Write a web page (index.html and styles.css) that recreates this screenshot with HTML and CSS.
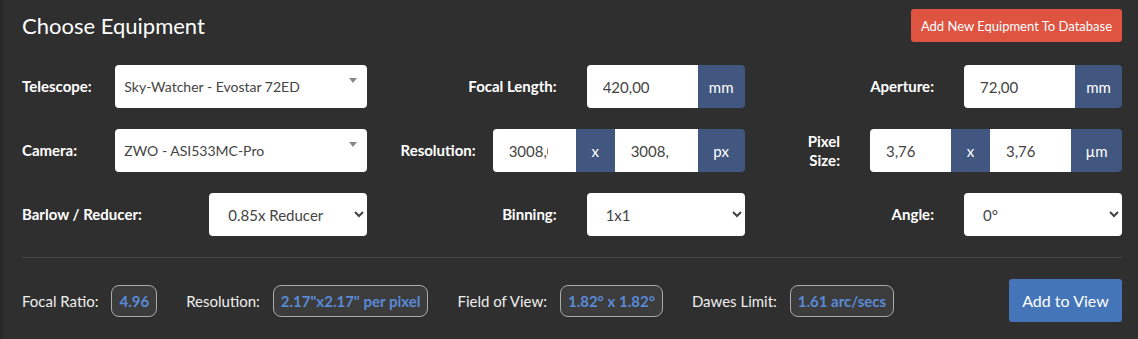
FILE: index.html
```html
<!DOCTYPE html>
<html lang="en">
<head>
    <meta charset="UTF-8">
    <title>Choose Equipment</title>
    <link rel="stylesheet" href="styles.css">
</head>
<body>
    <div class="panel">
        <div class="panel-head">
            <h1>Choose Equipment</h1>
            <button class="btn btn-red">Add New Equipment To Database</button>
        </div>

        <div class="form-grid">
            <!-- row 1 -->
            <div class="field">
                <label class="left">Telescope:</label>
                <div class="picker wide">
                    <span>Sky-Watcher - Evostar 72ED</span>
                    <i class="caret"></i>
                </div>
            </div>
            <div class="field">
                <label>Focal Length:</label>
                <div class="group narrow">
                    <input type="text" value="420,00">
                    <span class="addon">mm</span>
                </div>
            </div>
            <div class="field">
                <label>Aperture:</label>
                <div class="group narrow">
                    <input type="text" value="72,00">
                    <span class="addon">mm</span>
                </div>
            </div>

            <!-- row 2 -->
            <div class="field">
                <label class="left">Camera:</label>
                <div class="picker wide">
                    <span>ZWO - ASI533MC-Pro</span>
                    <i class="caret"></i>
                </div>
            </div>
            <div class="field">
                <label class="tight">Resolution:</label>
                <div class="group wide">
                    <input type="text" value="3008,00">
                    <span class="addon addon-x">x</span>
                    <input type="text" value="3008,">
                    <span class="addon">px</span>
                </div>
            </div>
            <div class="field">
                <label class="wrap">Pixel Size:</label>
                <div class="group wide">
                    <input type="text" value="3,76">
                    <span class="addon addon-x">x</span>
                    <input type="text" value="3,76">
                    <span class="addon addon-um">µm</span>
                </div>
            </div>

            <!-- row 3 -->
            <div class="field">
                <label class="left">Barlow / Reducer:</label>
                <select class="narrow">
                    <option>0.85x Reducer</option>
                </select>
            </div>
            <div class="field">
                <label>Binning:</label>
                <select class="narrow">
                    <option>1x1</option>
                </select>
            </div>
            <div class="field">
                <label>Angle:</label>
                <select class="narrow">
                    <option>0°</option>
                </select>
            </div>
        </div>

        <hr>

        <div class="results">
            <span class="res-label">Focal Ratio:</span>
            <span class="badge">4.96</span>
            <span class="res-label">Resolution:</span>
            <span class="badge">2.17"x2.17" per pixel</span>
            <span class="res-label">Field of View:</span>
            <span class="badge">1.82° x 1.82°</span>
            <span class="res-label">Dawes Limit:</span>
            <span class="badge">1.61 arc/secs</span>
            <button class="btn btn-blue">Add to View</button>
        </div>
    </div>
</body>
</html>
```

FILE: styles.css
```css
body { margin: 0; background: #2f2f2f; font-family: Lato, "Open Sans", sans-serif; color: #fff; }

.panel {
    border-left: 3px solid #282828;
    padding: 9px 16px 18px 19px;
    height: 312px;
}

.panel-head {
    display: flex;
    justify-content: space-between;
    align-items: center;
}

.panel-head h1 {
    margin: 0;
    font-size: 22px;
    font-weight: 400;
    line-height: 28px;
}

.btn {
    border: none;
    border-radius: 3px;
    color: #fff;
    font-family: Lato, sans-serif;
    cursor: pointer;
    white-space: nowrap;
}
.btn-red { background: #de5440; font-size: 13px; height: 33px; padding: 0 10px; }
.btn-blue { background: #4475b8; font-size: 16px; height: 43px; width: 113px; margin-left: auto; }

.form-grid {
    display: grid;
    grid-template-columns: repeat(3, 1fr);
    column-gap: 32px;
    row-gap: 21px;
    margin-top: 23px;
}

.field { display: flex; align-items: center; height: 43px; }

.field label {
    flex: 1;
    text-align: right;
    padding-right: 30px;
    font-size: 15px;
    font-weight: 700;
    white-space: nowrap;
    line-height: 19px;
}
.field label.left { text-align: left; padding-right: 0; }
.field label.tight { padding-right: 17px; }
.field label.wrap { white-space: normal; }

.wide { width: 252px; }
.narrow { width: 158px; }

.picker {
    height: 43px;
    box-sizing: border-box;
    background: #fff;
    border-radius: 4px;
    display: flex;
    justify-content: space-between;
    align-items: center;
    padding: 0 10px 0 9px;
    color: #444;
    font-size: 14px;
}
.caret {
    align-self: flex-start;
    margin-top: 13px;
    border-top: 5px solid #888;
    border-left: 4px solid transparent;
    border-right: 4px solid transparent;
}

.group {
    display: flex;
    height: 43px;
    border-radius: 4px;
    overflow: hidden;
}
.group input {
    flex: 1;
    min-width: 0;
    border: none;
    padding: 0 28px 0 16px;
    font-family: Lato, sans-serif;
    font-size: 15px;
    color: #444;
    outline: none;
}
.addon {
    background: #41577f;
    color: #fff;
    font-size: 15px;
    display: flex;
    align-items: center;
    justify-content: center;
    width: 56px;
}
.addon-x { width: 39px; }
.group .addon:last-child { width: 47px; }
.group .addon-um:last-child { width: 51px; }

select {
    height: 43px;
    border: none;
    border-radius: 4px;
    background: #fff;
    color: #444;
    font-family: Lato, sans-serif;
    font-size: 15px;
    padding: 0 6px 0 15px;
}

hr {
    border: none;
    border-top: 1px solid #444;
    margin: 21px 0 21px;
}

.results {
    display: flex;
    align-items: center;
    font-size: 15px;
}
.res-label { color: #eee; margin-right: 13px; }
.badge {
    border: 1px solid #aaa;
    border-radius: 8px;
    background: #3c3c3c;
    color: #5a8ad6;
    font-weight: 700;
    padding: 0 7px;
    height: 30px;
    line-height: 30px;
    margin-right: 29px;
}
```
